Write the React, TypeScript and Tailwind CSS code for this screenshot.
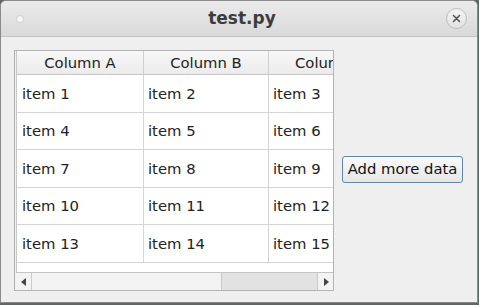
import React from "react";

const rows = [
  ["item 1", "item 2", "item 3"],
  ["item 4", "item 5", "item 6"],
  ["item 7", "item 8", "item 9"],
  ["item 10", "item 11", "item 12"],
  ["item 13", "item 14", "item 15"],
];

const font = { fontFamily: '"DejaVu Sans", sans-serif' };

export default function App() {
  return (
    <div className="w-[479px] h-[305px] bg-[#5f6868] overflow-hidden" style={font}>
      <div className="w-[478px] h-[303px] bg-[#efefef] border border-[#8a8a8a] rounded-t-[6px] flex flex-col overflow-hidden">
        {/* Title bar */}
        <div className="h-[36px] shrink-0 flex items-center justify-between px-[15px] bg-gradient-to-b from-[#ebebeb] to-[#d9d9d9] border-b border-[#c4c4c4]">
          <div className="w-[8px] h-[8px] rounded-full bg-[#f7f7f7] border border-[#cfcfcf]" />
          <div className="text-[17px] font-bold text-[#3c3c3c] ml-[14px]">test.py</div>
          <div className="w-[21px] h-[21px] rounded-full border border-[#bcbcbc] bg-gradient-to-b from-[#f4f4f4] to-[#e2e2e2] flex items-center justify-center mr-[-5px]">
            <svg width="9" height="9" viewBox="0 0 9 9">
              <path d="M1.5 1.5 L7.5 7.5 M7.5 1.5 L1.5 7.5" stroke="#555" strokeWidth="1.6" strokeLinecap="round" />
            </svg>
          </div>
        </div>
        {/* Body */}
        <div className="flex items-center pl-[13px] pt-[13px] gap-[8px]">
          <div className="w-[320px] h-[241px] border border-[#b3b3b3] bg-[#efefef] flex flex-col">
            <div className="flex-1 flex flex-col overflow-hidden border-l border-[#c8c8c8] ml-[1px] bg-white">
              {/* header */}
              <div className="flex h-[24px] shrink-0 bg-gradient-to-b from-[#f8f8f8] to-[#ebebeb] border-b border-[#c6c6c6] text-[14.8px] text-[#222]">
                <div className="w-[127px] shrink-0 border-r border-[#cfcfcf] flex items-center justify-center pt-[2px]">Column A</div>
                <div className="w-[125px] shrink-0 border-r border-[#cfcfcf] flex items-center justify-center pt-[2px]">Column B</div>
                <div className="w-[125px] shrink-0 flex items-center pl-[26px] pt-[2px] whitespace-nowrap">Column C</div>
              </div>
              {rows.map((r, i) => (
                <div key={i} className="flex h-[37.6px] shrink-0 border-b border-[#d4d4d4] text-[14.8px] text-[#222]">
                  <div className="w-[127px] shrink-0 border-r border-[#d4d4d4] flex items-center pl-[5px] pt-[1px]">{r[0]}</div>
                  <div className="w-[125px] shrink-0 border-r border-[#d4d4d4] flex items-center pl-[4px] pt-[1px]">{r[1]}</div>
                  <div className="w-[125px] shrink-0 flex items-center pl-[4px] pt-[1px] whitespace-nowrap">{r[2]}</div>
                </div>
              ))}
              <div className="flex-1" />
            </div>
            {/* scrollbar */}
            <div className="h-[18px] shrink-0 flex border-t border-[#c4c4c4] ml-[1px] bg-[#e2e2e2]">
              <div className="w-[16px] border-r border-[#cacaca] bg-[#f3f3f3] flex items-center justify-center">
                <svg width="6" height="8" viewBox="0 0 6 8"><path d="M5 0 L0 4 L5 8 Z" fill="#444" /></svg>
              </div>
              <div className="w-[190px] bg-[#f3f3f3] border-r border-[#c8c8c8]" />
              <div className="flex-1" />
              <div className="w-[16px] border-l border-[#cacaca] bg-[#f3f3f3] flex items-center justify-center">
                <svg width="6" height="8" viewBox="0 0 6 8"><path d="M1 0 L6 4 L1 8 Z" fill="#444" /></svg>
              </div>
            </div>
          </div>
          <button className="h-[27px] w-[121px] rounded-[3px] border border-[#5f85ad] bg-gradient-to-b from-[#fafafa] to-[#e6e6e6] text-[14.8px] text-[#111] whitespace-nowrap mt-[-2px]" style={font}>
            Add more data
          </button>
        </div>
      </div>
    </div>
  );
}
